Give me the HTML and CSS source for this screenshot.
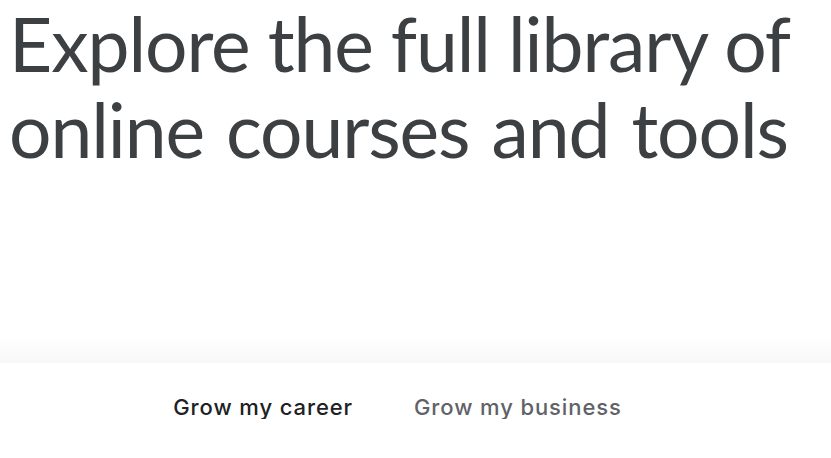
FILE: index.html
```html
<!DOCTYPE html>
<html lang="en">

<head>
    <meta charset="UTF-8">
    <meta name="viewport" content="width=device-width, initial-scale=1.0">
    <title>Explore courses</title>
    <link rel="stylesheet" href="styles.css">
</head>

<body>
    <!-- 标题区域 -->
    <section class="hero">
        <h1>Explore the full library of<br><span class="line-wide">online courses and tools</span></h1>
    </section>

    <!-- 分类切换 -->
    <nav class="tabs">
        <a href="#" class="tab active">Grow my career</a>
        <a href="#" class="tab">Grow my business</a>
    </nav>
</body>

</html>
```
FILE: styles.css
```css
* {
    margin: 0;
    padding: 0;
    box-sizing: border-box;
}

body {
    background: white;
    font-family: 'Lato', 'Liberation Sans', sans-serif;
}

.hero {
    height: 363px;
    padding: 0 9px;
    background: linear-gradient(to bottom, #fff 0, #fff 337px, #f7f7f7 363px);
}

h1 {
    color: #3c4043;
    font-weight: 400;
    font-size: 75px;
    line-height: 86px;
    letter-spacing: -1.1px;
}

.line-wide {
    word-spacing: 4px;
}

.tabs {
    display: flex;
    justify-content: center;
    gap: 61px;
    padding: 32px 36px 0 0;
}

.tab {
    font-family: 'Inter', sans-serif;
    font-size: 22px;
    line-height: 24px;
    font-weight: 500;
    letter-spacing: 0.9px;
    color: #5f6368;
    text-decoration: none;
}

.tab.active {
    color: #202124;
}
```
